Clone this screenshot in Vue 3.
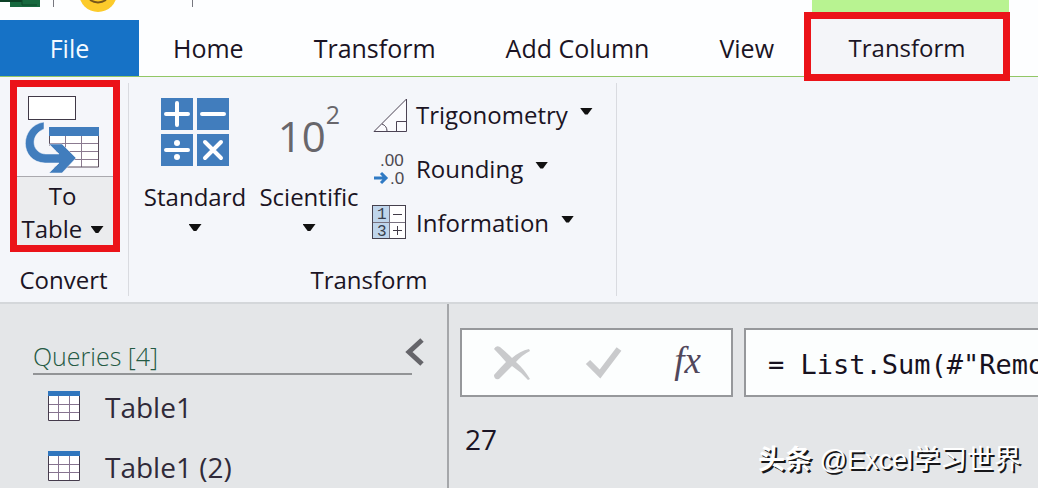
<script setup>
import { ref } from 'vue'

const tabs = ['Home', 'Transform', 'Add Column', 'View']
const queries = ['Table1', 'Table1 (2)']
const formula = ref('= List.Sum(#"Removed Other Columns"[Amount])')
</script>

<template>
  <div class="window">
    <header class="titlebar">
      <svg class="quick" width="200" height="12" viewBox="0 0 200 12" aria-hidden="true">
        <rect x="10" width="30" height="7" fill="#17693f" />
        <rect x="0" width="22" height="2" fill="#0c4026" />
        <path d="M22 0v5h15" fill="none" stroke="#0c4a2b" stroke-width="1" />
        <path d="M53.500 0v7M192.500 0v7" stroke="#77777f" stroke-width="1" />
        <circle cx="98" cy="-7" r="19" fill="#fccb2b" />
        <path d="M90 0q8 5 16 0" fill="none" stroke="#76561a" stroke-width="2" />
      </svg>
      <span class="context-strip"></span>
    </header>

    <nav class="tabs" aria-label="Ribbon tabs">
      <button class="tab file">File</button>
      <button v-for="tab in tabs" :key="tab" class="tab">{{ tab }}</button>
      <button class="tab context">Transform</button>
    </nav>

    <section class="ribbon">
      <div class="group convert">
        <button class="to-table">
          <span class="to-icon">
            <svg width="80" height="82" viewBox="0 0 80 82" aria-hidden="true">
              <rect x="6.500" y="4.500" width="47" height="23" fill="#fff" stroke="#403947" />
              <rect x="27" y="35" width="50" height="40" fill="#fff" />
              <path d="M27 51.500h50M27 59.500h50M27 67.500h50M43.500 43v32M59.500 43v32" stroke="#8b7a90" fill="none" />
              <path d="M27.500 43v32h49V43" stroke="#5a4d5c" fill="none" />
              <rect x="27" y="35" width="50" height="9" fill="#417dbd" />
              <path d="M2 51H27V53L37 62H25V70H37L29 79L2 74Z" fill="#f5f6fa" />
              <path d="M22 30V37C7 43 10 62 24 62H37L27 52H40L54 66L40 81H27L37 71H23C-3 70 -3 34 22 30Z" fill="#417dbd" stroke="#f5f6fa" stroke-width="0.500" />
            </svg>
          </span>
          <span class="to-text">To<br />Table <i class="caret"></i></span>
        </button>
        <h2>Convert</h2>
      </div>

      <div class="group transform">
        <div class="tools">
          <button class="large">
            <svg width="68" height="68" viewBox="0 0 68 68" aria-hidden="true">
              <path d="M0 0h32v32H0zM36 0h32v32H36zM0 36h32v32H0zM36 36h32v32H36z" fill="#417dbd" />
              <path d="M5 16h22M16 5v22M41 16h22M5 52h22M44 44l16 16M60 44L44 60" stroke="#fff" stroke-width="4" stroke-linecap="round" />
              <circle cx="16" cy="45" r="3" fill="#fff" /><circle cx="16" cy="59" r="3" fill="#fff" />
            </svg>
            <span>Standard</span>
            <i class="caret"></i>
          </button>
          <button class="large">
            <span class="power">10<sup>2</sup></span>
            <span>Scientific</span>
            <i class="caret"></i>
          </button>
          <div class="small-tools">
            <button class="small">
              <svg width="36" height="36" viewBox="0 0 36 36" aria-hidden="true">
                <path d="M2 34.500L34.500 2v32.500ZM24.500 34V24.500H34M10 27q5 2 5 7" fill="#fbfbfe" stroke="#4c4354" />
              </svg>
              <span>Trigonometry</span><i class="caret"></i>
            </button>
            <button class="small">
              <svg class="digits" width="36" height="36" viewBox="0 0 36 36" aria-hidden="true">
                <text x="8" y="15">.00</text>
                <text x="18" y="33">.0</text>
                <path d="M2 27h11M9 22l5 5l-5 5" fill="none" stroke="#2f7ac4" stroke-width="3" />
              </svg>
              <span>Rounding</span><i class="caret"></i>
            </button>
            <button class="small">
              <svg class="mono" width="36" height="36" viewBox="0 0 36 36" aria-hidden="true">
                <rect x="1" y="1" width="32" height="32" fill="#fff" />
                <rect x="1" y="1" width="16" height="32" fill="#bfd5eb" />
                <path d="M17.500 1v32M1 17.500h32" stroke="#77717f" />
                <rect x="0.500" y="0.500" width="33" height="33" fill="none" stroke="#45404d" />
                <text x="5" y="14">1</text>
                <text x="5" y="31">3</text>
                <path d="M21 9.500h9M21 25.500h9M25.500 21v9" stroke="#413b48" />
              </svg>
              <span>Information</span><i class="caret"></i>
            </button>
          </div>
        </div>
        <h2>Transform</h2>
      </div>
    </section>

    <main class="workspace">
      <aside class="queries">
        <div class="queries-head">
          <h3>Queries [4]</h3>
          <button class="collapse" aria-label="Collapse queries">
            <svg width="20" height="28" viewBox="0 0 20 28" aria-hidden="true">
              <path d="M17 2L4 14L17 26" fill="none" stroke="#65656a" stroke-width="5" />
            </svg>
          </button>
        </div>
        <ul>
          <li v-for="query in queries" :key="query">
            <button class="query">
              <svg width="32" height="30" viewBox="0 0 32 30" aria-hidden="true">
                <rect width="32" height="30" fill="#fff" />
                <path d="M0 13.500h32M0 21.500h32M10.500 5v25M21.500 5v25" stroke="#86738f" />
                <path d="M0.500 4v25.500h31V4" fill="none" stroke="#453b4c" />
                <rect width="32" height="5" fill="#2f75bd" />
              </svg>
              <span>{{ query }}</span>
            </button>
          </li>
        </ul>
      </aside>

      <section class="editor">
        <div class="formula-row">
          <div class="formula-actions">
            <button aria-label="Cancel">
              <svg width="38" height="36" viewBox="0 0 38 36" aria-hidden="true">
                <path d="M1 4Q3 0 7 2Q13 7 19 13Q27 6 36 4L37 6Q29 10 23 17Q31 24 37 34L35 35Q28 27 19 21Q12 28 6 34Q1 35 1 30Q7 23 13 17Q7 10 1 4Z" fill="#c9cacc" />
              </svg>
            </button>
            <button aria-label="Confirm">
              <svg width="38" height="36" viewBox="0 0 38 36" aria-hidden="true">
                <path d="M4 17L16 29L35 4" fill="none" stroke="#c9cacc" stroke-width="6" />
              </svg>
            </button>
            <button class="fx" aria-label="Insert function"><i>fx</i></button>
          </div>
          <input v-model="formula" class="formula" type="text" aria-label="Formula" spellcheck="false" />
        </div>
        <output>27</output>
      </section>
    </main>
    <div class="watermark"><b>头条</b> @Excel学习世界</div>
  </div>
</template>

<style>
body {
  margin: 0;
  background: #e4e6e8;
}
</style>

<style scoped>
* {
  box-sizing: border-box;
}

.window {
  position: relative;
  display: flex;
  flex-direction: column;
  min-height: 100vh;
  overflow: hidden;
  color: #1b1424;
  font: 24px/32px "Open Sans", "Noto Sans", sans-serif;
}

button {
  padding: 0;
  border: 0;
  background: none;
  color: inherit;
  font: inherit;
}

h2,
h3,
ul {
  margin: 0;
  padding: 0;
  font-size: 24px;
  font-weight: 400;
}

svg {
  display: block;
  flex: none;
}

.titlebar {
  display: flex;
  height: 20px;
  background: #fdfeff;
}

.context-strip {
  width: 197px;
  margin-left: 612px;
  background: #b8f391;
}

.tabs {
  display: flex;
  height: 57px;
  background: #fdfeff;
  border-bottom: 1px solid #92c766;
  white-space: nowrap;
}

.tab {
  padding: 0 35px;
  font-size: 25px;
}

.file {
  width: 139px;
  margin-right: -1px;
  background: #1672c6;
  color: #f4faff;
  font-weight: 500;
}

.context {
  position: relative;
  z-index: 1;
  width: 206px;
  height: 69px;
  margin: -8px 0 -5px -5px;
  padding: 2px 0 0;
  border: 7px solid #eb1319;
  background: #f4f5f9;
  font-size: 24px;
}

.ribbon {
  display: flex;
  background: #f4f6fa;
  border-bottom: 2px solid #d4d7da;
}

.group {
  position: relative;
  display: flex;
  flex-direction: column;
  justify-content: space-between;
  height: 225px;
  padding: 3px 0 6px;
  text-align: center;
}

.group::after {
  content: "";
  position: absolute;
  inset: 6px 0 6px auto;
  border-right: 1px solid #d9dbe0;
}

.convert {
  width: 129px;
  padding-right: 2px;
}

.to-table {
  display: flex;
  flex-direction: column;
  width: 110px;
  margin-left: 10px;
  border: 7px solid #eb1319;
}

.to-icon {
  display: block;
  width: 100%;
  padding: 5px 0 2px 5px;
  border-bottom: 1px solid #aaa9ae;
  background: #f5f6fa;
}

.to-text {
  width: 100%;
  padding: 2px 5px 0 0;
  background: #ebecee;
  line-height: 33px;
}

.caret {
  display: inline-block;
  width: 13px;
  height: 7px;
  flex: none;
  background: #111;
  clip-path: polygon(0 0, 100% 0, 60% 100%, 40% 100%);
}

.to-text .caret {
  margin: 0 0 5px 2px;
}

.transform {
  width: 488px;
  padding-right: 8px;
}

.tools {
  display: flex;
  padding-left: 9px;
}

.large {
  display: flex;
  flex-direction: column;
  align-items: center;
  width: 114px;
  padding-top: 18px;
}

.large > span:not(.power) {
  margin-top: 15px;
}

.large .caret {
  margin-top: 11px;
}

.power {
  display: flex;
  height: 68px;
  padding-top: 14px;
  color: #68666b;
  font-size: 42px;
  line-height: 48px;
}

.power sup {
  margin-top: -16px;
  font-size: 25px;
  line-height: 36px;
}

.small-tools {
  display: grid;
  gap: 18px;
  align-content: start;
  padding: 17px 0 0 6px;
}

.small {
  display: flex;
  align-items: center;
  height: 36px;
}

.small span {
  margin-left: 8px;
}

.small .caret {
  margin: 0 0 8px 12px;
}

.digits {
  overflow: visible;
  fill: #4c4950;
  font: 17px "Liberation Sans", sans-serif;
}

.mono {
  overflow: visible;
  fill: #39404d;
  font: 16px "Liberation Mono", monospace;
}

.workspace {
  display: flex;
  flex: 1;
  background: #e4e6e8;
}

.queries {
  width: 449px;
  flex: none;
  padding: 34px 22px 0 33px;
  border-right: 2px solid #a5a7aa;
}

.queries-head {
  display: flex;
  justify-content: space-between;
  height: 37px;
}

.queries-head h3 {
  flex: 1;
  padding-top: 2px;
  border-bottom: 2px solid #929496;
  color: #245a44;
  font-size: 25px;
  font-weight: 300;
}

.collapse {
  align-self: flex-start;
  margin-left: -7px;
}

ul {
  padding-top: 2px;
  list-style: none;
}

.query {
  display: flex;
  align-items: center;
  gap: 25px;
  height: 60px;
  padding-left: 15px;
  color: #302a39;
  font-size: 28px;
}

.query svg {
  margin-bottom: 2px;
}

.editor {
  flex: 1;
  min-width: 0;
  padding: 24px 0 0 11px;
}

.formula-row {
  display: flex;
  gap: 11px;
}

.formula-actions {
  display: flex;
  align-items: center;
  justify-content: space-between;
  width: 273px;
  height: 69px;
  flex: none;
  padding: 0 30px 0 31px;
  border: 2px solid #96989b;
  background: #fcfefe;
}

.fx {
  padding-bottom: 4px;
  color: #51475b;
  font: 37px/40px "Liberation Serif", serif;
}

.formula {
  flex: 1;
  min-width: 0;
  padding: 4px 0 0 22px;
  border: 2px solid #96989b;
  border-right: 0;
  border-radius: 0;
  outline: 0;
  background: #fcfefe;
  color: #17121f;
  font: 27px "DejaVu Sans Mono", monospace;
}

output {
  display: block;
  padding: 26px 0 0 5px;
  font-size: 28px;
}

.watermark {
  position: absolute;
  right: 17px;
  bottom: 18px;
  color: #fff;
  font: 27px/38px "Liberation Sans", "Noto Sans CJK SC", sans-serif;
  text-shadow: 2px 2px 0 #17171a;
  white-space: nowrap;
}
</style>
